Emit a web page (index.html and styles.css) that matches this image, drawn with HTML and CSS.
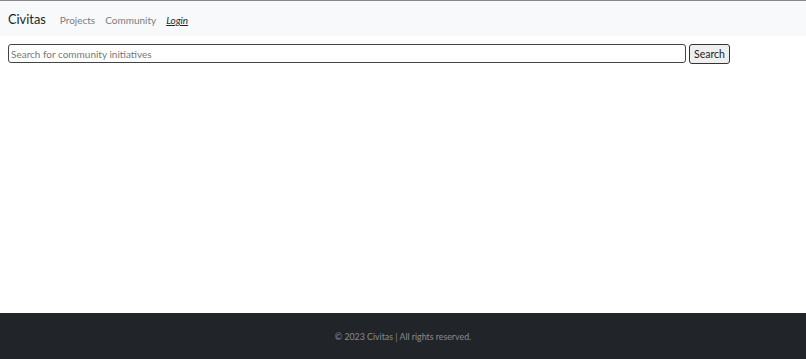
FILE: index.html
```html
<!DOCTYPE html>
<html lang="en">
<head>
  <meta charset="UTF-8" />
  <meta name="viewport" content="width=device-width, initial-scale=1.0" />
  <title>Civitas</title>
  <link rel="stylesheet" href="styles.css">
</head>
<body>
  <!-- Top navigation -->
  <nav class="navbar">
    <a class="brand" href="#">Civitas</a>
    <ul class="nav-links">
      <li><a href="#">Projects</a></li>
      <li><a href="#">Community</a></li>
      <li><a class="login" href="#">Login</a></li>
    </ul>
  </nav>

  <main class="content">
    <!-- Search form -->
    <form class="search-form">
      <input type="text" class="search-input" placeholder="Search for community initiatives" />
      <button type="submit" class="search-button">Search</button>
    </form>
  </main>

  <footer class="footer">
    <p>&copy; 2023 Civitas | All rights reserved.</p>
  </footer>
</body>
</html>
```

FILE: styles.css
```css
/* Global styles */
html, body {
  height: 100%;
}
body {
  margin: 0;
  font-family: Lato, "Noto Sans", Arial, sans-serif;
  color: #212529;
  background-color: #ffffff;
  display: flex;
  flex-direction: column;
  border-top: 1px solid #8a8a8a;
  box-sizing: border-box;
}
/* Navbar */
.navbar {
  display: flex;
  align-items: baseline;
  height: 35px;
  box-sizing: border-box;
  padding: 7px 8px 0;
  background-color: #f8f9fa;
}
.brand {
  font-size: 12.8px;
  color: #212529;
  text-decoration: none;
  margin-right: 14px;
}
.nav-links {
  display: flex;
  gap: 10px;
  list-style: none;
  margin: 0;
  padding: 0;
}
.nav-links a {
  font-size: 10px;
  color: #7a7c7f;
  text-decoration: none;
}
.nav-links .login {
  color: #212529;
  font-style: italic;
  text-decoration: underline;
}
/* Search */
.content {
  flex: 1;
  padding: 8px 8px;
}
.search-form {
  display: flex;
  gap: 3px;
}
.search-input {
  width: 678px;
  height: 19px;
  box-sizing: border-box;
  padding: 1px 2px;
  border: 1px solid #444;
  border-radius: 3px;
  font-family: inherit;
  font-size: 10px;
}
.search-input::placeholder {
  color: #777;
}
.search-button {
  height: 20px;
  padding: 0 4px;
  border: 1px solid #333;
  border-radius: 3px;
  background-color: #efefef;
  font-family: inherit;
  font-size: 10.5px;
  color: #222;
}
/* Footer */
.footer {
  height: 46px;
  display: flex;
  align-items: center;
  justify-content: center;
  background-color: #212529;
}
.footer p {
  margin: 0;
  font-size: 8.8px;
  color: #8a8c8f;
}
```
